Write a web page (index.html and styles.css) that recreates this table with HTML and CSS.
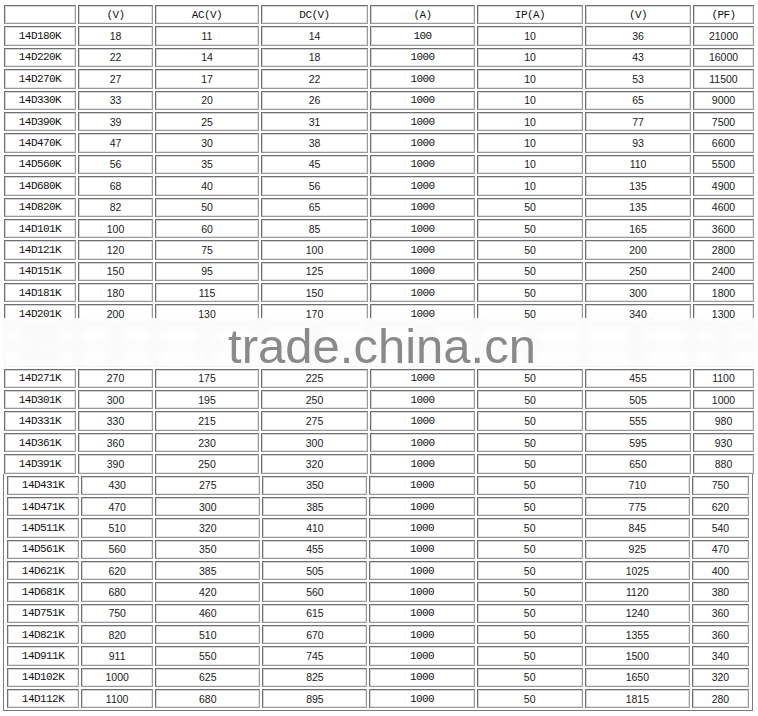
FILE: index.html
```html
<!DOCTYPE html>
<html lang="zh">
<head>
<meta charset="utf-8">
<title>14D 压敏电阻参数表</title>
<link rel="stylesheet" href="styles.css">
</head>
<body>
<div class="sheet">
  <table class="grid grid-a">
    <colgroup>
      <col class="c1"><col class="c2"><col class="c3"><col class="c4"><col class="c5"><col class="c6"><col class="c7"><col class="c8">
    </colgroup>
    <tr class="head"><td></td><td>(V)</td><td>AC(V)</td><td>DC(V)</td><td>(A)</td><td>IP(A)</td><td>(V)</td><td>(PF)</td></tr>
    <tr><td>14D180K</td><td>18</td><td>11</td><td>14</td><td>100</td><td>10</td><td>36</td><td>21000</td></tr>
    <tr><td>14D220K</td><td>22</td><td>14</td><td>18</td><td>1000</td><td>10</td><td>43</td><td>16000</td></tr>
    <tr><td>14D270K</td><td>27</td><td>17</td><td>22</td><td>1000</td><td>10</td><td>53</td><td>11500</td></tr>
    <tr><td>14D330K</td><td>33</td><td>20</td><td>26</td><td>1000</td><td>10</td><td>65</td><td>9000</td></tr>
    <tr><td>14D390K</td><td>39</td><td>25</td><td>31</td><td>1000</td><td>10</td><td>77</td><td>7500</td></tr>
    <tr><td>14D470K</td><td>47</td><td>30</td><td>38</td><td>1000</td><td>10</td><td>93</td><td>6600</td></tr>
    <tr><td>14D560K</td><td>56</td><td>35</td><td>45</td><td>1000</td><td>10</td><td>110</td><td>5500</td></tr>
    <tr><td>14D680K</td><td>68</td><td>40</td><td>56</td><td>1000</td><td>10</td><td>135</td><td>4900</td></tr>
    <tr><td>14D820K</td><td>82</td><td>50</td><td>65</td><td>1000</td><td>50</td><td>135</td><td>4600</td></tr>
    <tr><td>14D101K</td><td>100</td><td>60</td><td>85</td><td>1000</td><td>50</td><td>165</td><td>3600</td></tr>
    <tr><td>14D121K</td><td>120</td><td>75</td><td>100</td><td>1000</td><td>50</td><td>200</td><td>2800</td></tr>
    <tr><td>14D151K</td><td>150</td><td>95</td><td>125</td><td>1000</td><td>50</td><td>250</td><td>2400</td></tr>
    <tr><td>14D181K</td><td>180</td><td>115</td><td>150</td><td>1000</td><td>50</td><td>300</td><td>1800</td></tr>
    <tr><td>14D201K</td><td>200</td><td>130</td><td>170</td><td>1000</td><td>50</td><td>340</td><td>1300</td></tr>
    <tr class="veiled"><td>14D221K</td><td>220</td><td>140</td><td>180</td><td>1000</td><td>50</td><td>360</td><td>1200</td></tr>
    <tr class="veiled"><td>14D241K</td><td>240</td><td>150</td><td>200</td><td>1000</td><td>50</td><td>395</td><td>1100</td></tr>
    <tr><td>14D271K</td><td>270</td><td>175</td><td>225</td><td>1000</td><td>50</td><td>455</td><td>1100</td></tr>
    <tr><td>14D301K</td><td>300</td><td>195</td><td>250</td><td>1000</td><td>50</td><td>505</td><td>1000</td></tr>
    <tr><td>14D331K</td><td>330</td><td>215</td><td>275</td><td>1000</td><td>50</td><td>555</td><td>980</td></tr>
    <tr><td>14D361K</td><td>360</td><td>230</td><td>300</td><td>1000</td><td>50</td><td>595</td><td>930</td></tr>
    <tr><td>14D391K</td><td>390</td><td>250</td><td>320</td><td>1000</td><td>50</td><td>650</td><td>880</td></tr>
  </table>
  <table class="grid grid-b">
    <colgroup>
      <col class="d1"><col class="d2"><col class="d3"><col class="d4"><col class="d5"><col class="d6"><col class="d7"><col class="d8">
    </colgroup>
    <tr><td>14D431K</td><td>430</td><td>275</td><td>350</td><td>1000</td><td>50</td><td>710</td><td>750</td></tr>
    <tr><td>14D471K</td><td>470</td><td>300</td><td>385</td><td>1000</td><td>50</td><td>775</td><td>620</td></tr>
    <tr><td>14D511K</td><td>510</td><td>320</td><td>410</td><td>1000</td><td>50</td><td>845</td><td>540</td></tr>
    <tr><td>14D561K</td><td>560</td><td>350</td><td>455</td><td>1000</td><td>50</td><td>925</td><td>470</td></tr>
    <tr><td>14D621K</td><td>620</td><td>385</td><td>505</td><td>1000</td><td>50</td><td>1025</td><td>400</td></tr>
    <tr><td>14D681K</td><td>680</td><td>420</td><td>560</td><td>1000</td><td>50</td><td>1120</td><td>380</td></tr>
    <tr><td>14D751K</td><td>750</td><td>460</td><td>615</td><td>1000</td><td>50</td><td>1240</td><td>360</td></tr>
    <tr><td>14D821K</td><td>820</td><td>510</td><td>670</td><td>1000</td><td>50</td><td>1355</td><td>360</td></tr>
    <tr><td>14D911K</td><td>911</td><td>550</td><td>745</td><td>1000</td><td>50</td><td>1500</td><td>340</td></tr>
    <tr><td>14D102K</td><td>1000</td><td>625</td><td>825</td><td>1000</td><td>50</td><td>1650</td><td>320</td></tr>
    <tr><td>14D112K</td><td>1100</td><td>680</td><td>895</td><td>1000</td><td>50</td><td>1815</td><td>280</td></tr>
  </table>
  <div class="watermark"><span class="wm-text">trade.china.cn</span></div>
</div>
</body>
</html>
```
FILE: styles.css
```css
html, body {
  margin: 0;
  padding: 0;
  background: #ffffff;
}

.sheet {
  position: relative;
  width: 758px;
  padding: 3px 0 0 0;
  font-family: "Liberation Sans Narrow", "Liberation Sans", Arial, sans-serif;
  color: #1a1a1a;
}

.grid {
  border-collapse: separate;
  border-spacing: 2px;
  table-layout: fixed;
}

.grid td {
  height: 19.4px;
  padding: 1px 0 0 0;
  box-sizing: border-box;
  border: 1px solid;
  border-color: #6f6f6f #9a9a9a #9a9a9a #6f6f6f;
  box-shadow: inset 1px 1px 0 #d4d4d4, inset -1px -1px 0 #e4e4e4;
  text-align: center;
  vertical-align: middle;
  font-size: 10.5px;
  line-height: 11px;
  white-space: nowrap;
}

.grid td:first-child,
.grid td:nth-child(5),
.grid .head td {
  font-family: "Liberation Mono", "Courier New", monospace;
  font-size: 11px;
  letter-spacing: -0.55px;
  color: #111111;
}

.grid .veiled td {
  color: #555555;
}

.grid-a {
  margin-left: 2px;
  width: 754px;
}

.grid-a .c1 { width: 72px; }
.grid-a .c2 { width: 75px; }
.grid-a .c3 { width: 104px; }
.grid-a .c4 { width: 107px; }
.grid-a .c5 { width: 105px; }
.grid-a .c6 { width: 106px; }
.grid-a .c7 { width: 106px; }
.grid-a .c8 { width: 61px; }

.grid-b {
  margin: -2px 0 0 3px;
  width: 750px;
  padding: 0 1px;
  border: 1px solid #7a7a7a;
  border-top: none;
}

.grid-b td {
  height: 19.35px;
}

.grid-b .d1 { width: 72px; }
.grid-b .d2 { width: 72px; }
.grid-b .d3 { width: 105px; }
.grid-b .d4 { width: 105px; }
.grid-b .d5 { width: 105px; }
.grid-b .d6 { width: 106px; }
.grid-b .d7 { width: 105px; }
.grid-b .d8 { width: 57px; }

.watermark {
  position: absolute;
  left: 0;
  right: 0;
  top: 318px;
  height: 49px;
  display: flex;
  justify-content: center;
  align-items: flex-end;
  background: rgba(255, 255, 255, 0.86);
  backdrop-filter: blur(4px);
  -webkit-backdrop-filter: blur(4px);
}

.wm-text {
  font-family: "Liberation Sans", Arial, sans-serif;
  font-size: 49px;
  line-height: 49px;
  color: #8a8a8a;
  transform: translate(3px, 4px);
}
```
